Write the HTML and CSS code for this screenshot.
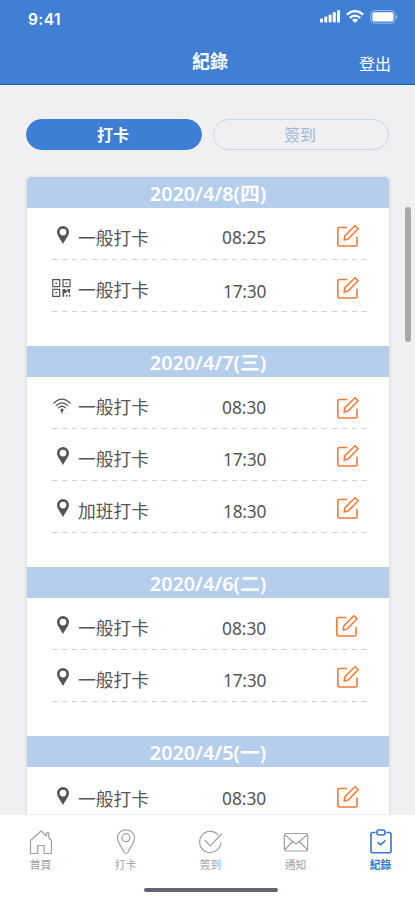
FILE: index.html
```html
<!DOCTYPE html>
<html lang="zh-Hant">
<head>
<meta charset="utf-8">
<meta name="viewport" content="width=device-width, initial-scale=1">
<title>紀錄</title>
<link rel="stylesheet" href="styles.css">
</head>
<body>
<svg class="sprite" aria-hidden="true">
  <symbol id="pin" viewBox="0 0 12 18"><path fill-rule="evenodd" d="M6 0a6 6 0 0 1 6 6c0 3.500-3.500 7-6 12C3.500 13 0 9.500 0 6a6 6 0 0 1 6-6zm0 2.700a3.400 3.400 0 1 0 0 6.800 3.400 3.400 0 0 0 0-6.800z"/></symbol>
  <symbol id="qr" viewBox="0 0 19 18"><g fill="none" stroke="currentColor" stroke-width="1.200"><path d="M.7.700h7v7h-7zM11 .7h7v7h-7zM.7 10.300h7v7h-7z"/></g><path d="M3.400 3.400h1.600v1.600H3.400zM13.700 3.400h1.600v1.600h-1.600zM3.400 13h1.600v1.600H3.400zM10.500 10h3v1.300h2V10H18v4h-1.500v-1.500h-2V14h-2.300v3.800h-1.700zM14 16h1.500v1.700H14zM17 15.500h1.300v2.200H17z"/></symbol>
  <symbol id="wifi" viewBox="0 0 18 16"><g fill="none" stroke="currentColor" stroke-width="1.200" stroke-linecap="round"><path d="M.8 5.200Q9-2.900 17.200 5.200M3.200 7.600q5.800-5.600 11.600 0M5.500 9.900q3.500-3.300 7 0"/></g><circle cx="9" cy="12" r="1.600"/><path d="M8.400 12h1.200v3.500H8.400z"/></symbol>
  <symbol id="edit" viewBox="0 0 22 22"><g fill="none" stroke="currentColor" stroke-width="1.600" stroke-linejoin="round" stroke-linecap="round"><path d="M9.600 2.500H2.300Q.8 2.500.8 4v15.500Q.8 21 2.300 21h16.200q1.500 0 1.500-1.500v-7.300"/><path d="M18 .8l3.100 3L11.200 14l-4 1 .7-4.200z"/></g></symbol>
</svg>
<div class="app">
  <header class="top">
    <div class="status">
      <span class="clock">9:41</span>
      <span class="signals">
        <svg width="20" height="13" viewBox="0 0 20 13" fill="currentColor"><rect y="8.500" width="3" height="4" rx="1"/><rect x="4.300" y="6.500" width="3" height="6" rx="1"/><rect x="8.600" y="4.500" width="3" height="8" rx="1"/><rect x="12.800" y="2" width="3" height="10.500" rx="1"/><rect x="17" y="0" width="3" height="12.500" rx="1"/></svg>
        <svg width="18" height="13" viewBox="0 0 18 13"><g fill="none" stroke="currentColor" stroke-width="2.300"><path d="M.8 4.700q8.200-7.300 16.400 0M3.800 7.900q5.200-4.600 10.400 0"/></g><path fill="currentColor" d="M6 10q3-2.400 6 0l-3 3z"/></svg>
        <svg width="28" height="14" viewBox="0 0 28 14"><rect x=".6" y=".6" width="24.500" height="12.600" rx="3.800" fill="none" stroke="currentColor" stroke-opacity=".45"/><rect x="2.300" y="2.300" width="21.200" height="9.200" rx="1.800" fill="currentColor"/><path d="M26.200 5v4q1.400-.5 1.400-2t-1.400-2z" fill="currentColor" opacity=".5"/></svg>
      </span>
    </div>
    <div class="nav"><h1>紀錄</h1><a class="logout">登出</a></div>
  </header>
  <main class="content">
    <div class="switch"><button class="pill active">打卡</button><button class="pill">簽到</button></div>
    <div class="card">
      <section class="day">
        <h2>2020/4/8(四)</h2>
        <div class="row raised"><svg class="kind pin"><use href="#pin"/></svg><span class="label">一般打卡</span><time>08:25</time><svg class="edit"><use href="#edit"/></svg></div>
        <div class="row raised late"><svg class="kind qr"><use href="#qr"/></svg><span class="label">一般打卡</span><time>17:30</time><svg class="edit"><use href="#edit"/></svg></div>
      </section>
      <section class="day">
        <h2>2020/4/7(三)</h2>
        <div class="row low"><svg class="kind wifi"><use href="#wifi"/></svg><span class="label">一般打卡</span><time>08:30</time><svg class="edit"><use href="#edit"/></svg></div>
        <div class="row high"><svg class="kind pin"><use href="#pin"/></svg><span class="label">一般打卡</span><time class="narrow">17:30</time><svg class="edit"><use href="#edit"/></svg></div>
        <div class="row"><svg class="kind pin"><use href="#pin"/></svg><span class="label">加班打卡</span><time class="narrow">18:30</time><svg class="edit"><use href="#edit"/></svg></div>
      </section>
      <section class="day">
        <h2>2020/4/6(二)</h2>
        <div class="row"><svg class="kind pin"><use href="#pin"/></svg><span class="label">一般打卡</span><time>08:30</time><svg class="edit shifted"><use href="#edit"/></svg></div>
        <div class="row"><svg class="kind pin"><use href="#pin"/></svg><span class="label">一般打卡</span><time class="narrow">17:30</time><svg class="edit"><use href="#edit"/></svg></div>
      </section>
      <section class="day">
        <h2>2020/4/5(一)</h2>
        <div class="row last"><svg class="kind pin"><use href="#pin"/></svg><span class="label">一般打卡</span><time>08:30</time><svg class="edit"><use href="#edit"/></svg></div>
      </section>
    </div>
    <div class="scrollbar"></div>
  </main>
  <footer class="bottom">
    <nav class="tabs">
      <a class="tab"><svg viewBox="0 0 26 28"><path d="M2.500 11.500 13 2l5.500 5V3.800h2.300V9l2.700 2.500v13h-7.300v-8H9.800v8H2.500z"/></svg><span>首頁</span></a>
      <a class="tab"><svg viewBox="0 0 26 28"><path d="M13 .8c5 0 8.500 3.500 8.500 8 0 4.700-3.600 8.200-6.500 14.200q-2 3-4 0C8.100 17 4.500 13.500 4.500 8.800c0-4.500 3.500-8 8.500-8z"/><circle cx="13" cy="8.700" r="4"/></svg><span>打卡</span></a>
      <a class="tab"><svg viewBox="0 0 26 28"><path d="M19.800 5.500A10.600 10.600 0 1 0 22.800 14M7 11.500l5.300 5.300L23.500 5"/></svg><span>簽到</span></a>
      <a class="tab"><svg viewBox="0 0 26 28"><rect x="1.300" y="4.500" width="23.400" height="17.500" rx="2"/><path d="M2 6l9.500 8q1.500 1 3 0L24 6M2 20.500l7.500-8M24 20.500l-7.500-8"/></svg><span>通知</span></a>
      <a class="tab current"><svg viewBox="0 0 26 28"><path d="M7 3.500H4.800Q3 3.500 3 5.300v16.700Q3 23.800 4.800 23.800h16.400q1.800 0 1.800-1.800V5.300Q23 3.500 21.200 3.500H19"/><rect x="9" y="1" width="8" height="5" rx="2"/><path d="M10 13.500l2.500 2.300 4.500-4"/></svg><span>紀錄</span></a>
    </nav>
    <div class="indicator"></div>
  </footer>
</div>
</body>
</html>
```
FILE: styles.css
```css
* { box-sizing: border-box; }
body { margin: 0; font-family: "Noto Sans", "Noto Sans CJK TC", sans-serif; color: #555; }
.sprite { position: absolute; width: 0; height: 0; }
svg { display: block; flex: none; }
h1, h2 { margin: 0; }

.app { width: 415px; height: 900px; display: flex; flex-direction: column; overflow: hidden; background: #f0f0f2; }

.top { height: 85px; flex: none; background: #407fd3; border-bottom: 1px solid #1762bd; color: #fff; }
.status { height: 38px; padding: 0 17px 0 28px; display: flex; align-items: center; justify-content: space-between; }
.clock { font: 600 15.500px/20px Inter, sans-serif; padding-top: 1px; letter-spacing: .4px; }
.signals { display: flex; align-items: center; gap: 6px; padding-bottom: 5px; }
.nav { height: 46px; padding: 0 24px; display: grid; grid-template-columns: 1fr auto 1fr; align-items: center; }
.nav h1 { grid-column: 2; font-size: 18px; line-height: 24px; margin-left: 5px; }
.logout { justify-self: end; font-size: 16px; line-height: 22px; padding-top: 5px; }

.content { position: relative; flex: 1; min-height: 0; overflow: hidden; padding: 34px 26px 0 27px; }
.switch { display: grid; grid-template-columns: 1fr 1fr; gap: 11px; margin: 0 0 27px -1px; }
.pill { height: 31px; padding: 0 2px 0 0; border: 1px solid #c5d9e6; border-radius: 16px; background: transparent; color: #9bb8d8; font: 400 16px/27px "Noto Sans CJK TC", sans-serif; }
.pill.active { background: #3d7fd4; border-color: #3d7fd4; color: #fff; font-weight: 700; }

.card { background: #fff; border-radius: 4px 4px 0 0; overflow: hidden; box-shadow: 0 1px 4px rgba(0, 0, 0, .12); }
.day { padding-bottom: 34px; }
.day h2 { height: 31px; background: #b5ceec; color: #fff; text-align: center; font-size: 19.800px; font-weight: 600; line-height: 34px; }
.row { height: 52px; margin: 0 22px 0 25px; padding-top: 8px; display: grid; grid-template-columns: 26px 144px 1fr 22px; align-items: center;
  background: repeating-linear-gradient(90deg, #c5d5dc 0 5px, transparent 5px 10px) left bottom / 100% 1px no-repeat; }
.kind { fill: currentColor; }
.kind.pin { width: 12px; height: 18px; margin: 0 0 6px 5px; }
.kind.qr { width: 19px; height: 18px; margin-bottom: 3px; }
.kind.wifi { width: 18px; height: 16px; margin: 0 0 2px 1px; }
.label { font-size: 17.800px; line-height: 24px; }
.row time { font-size: 17.300px; line-height: 24px; padding-top: 1px; }
.row time.narrow { padding-left: 1px; letter-spacing: -.2px; }
.row.late time { padding: 4px 0 0 1px; letter-spacing: -.2px; }
.edit { width: 22px; height: 22px; margin: 0 0 6px -8px; color: #f47a38; }
.raised .edit { margin-bottom: 4px; }
.raised { padding-top: 7px; }
.low .edit { margin-bottom: -2px; }
.high .edit { margin-bottom: 7px; }
.edit.shifted { margin: 0 0 4px -9px; }
.last { padding-top: 11px; }
.last .edit { margin-bottom: 3px; }
.scrollbar { position: absolute; right: 4px; top: 122px; width: 6px; height: 135px; border-radius: 3px; background: #a9a9ab; }

.bottom { height: 86px; flex: none; background: #fff; border-top: 1px solid #f0f0f0; }
.tabs { display: flex; width: 425px; margin-left: -2px; padding-top: 14px; height: 73px; }
.tab { width: 85px; display: flex; flex-direction: column; align-items: center; color: #a0a0a0; font-size: 10.800px; line-height: 16px; }
.tab svg { width: 26px; height: 28px; fill: none; stroke: currentColor; stroke-width: 1.200; stroke-linejoin: round; stroke-linecap: round; }
.tab.current { color: #3977c8; font-weight: 700; }
.tab.current svg { stroke-width: 1.600; }
.indicator { width: 134px; height: 4px; margin-left: 144px; border-radius: 2px; background: #656372; }
```
